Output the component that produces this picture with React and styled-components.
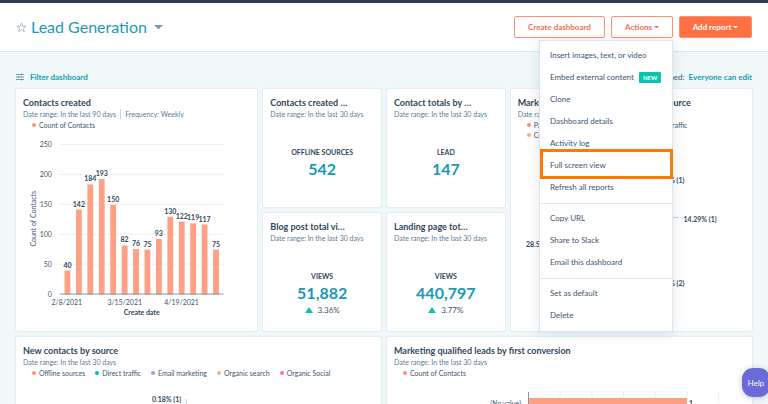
import React from 'react'
import styled, { createGlobalStyle } from 'styled-components';


const GlobalStyle = createGlobalStyle`
  * {
    box-sizing: border-box;
  }
  body {
    margin: 0;
    background: #f0f8f9;
    color: #40566f;
    font-family: Lato, "Liberation Sans", sans-serif;
    font-size: 8px;
  }
  button {
    font-family: inherit;
  }
`;

const Page = styled.div`
  height: 100vh;
  overflow: hidden;
`;

const TopBar = styled.div`
  height: 3px;
  background: #2d3e50;
`;

const Header = styled.header`
  display: flex;
  align-items: center;
  justify-content: space-between;
  height: 49px;
  padding: 0 16px;
  background: #fff;
  border-bottom: 1px solid #dbe4ea;
`;

const TitleGroup = styled.div`
  display: flex;
  align-items: center;
  gap: 4px;
`;

const PageTitle = styled.h1`
  margin: 0;
  color: #1b9bb8;
  font-size: 16px;
  line-height: 24px;
  font-weight: 400;
`;

const IconButton = styled.button`
  display: flex;
  padding: 0;
  border: none;
  background: none;
`;

const TitleMenuButton = styled(IconButton)`
  margin-left: 3px;
`;

const ButtonGroup = styled.div`
  display: flex;
  gap: 6px;
`;

const Button = styled.button`
  display: flex;
  align-items: center;
  justify-content: center;
  gap: 2px;
  min-width: ${props => props.$width}px;
  height: 22px;
  padding: 0;
  border: 1px solid #ff8f73;
  border-radius: 2px;
  background: ${props => props.$primary ? '#ff7043' : '#fff'};
  color: ${props => props.$primary ? '#fff' : '#f3704c'};
  font-size: 8px;
  font-weight: 700;
  cursor: pointer;
`;

const MenuAnchor = styled.div`
  position: relative;
`;

const Menu = styled.div`
  position: absolute;
  top: 24px;
  right: 0;
  z-index: 2;
  width: 134px;
  background: #fff;
  border: 1px solid #dce5ec;
  box-shadow: 0 1px 12px rgba(45, 62, 80, 0.13);
`;

const MenuGroup = styled.div`
  padding: 4px 0;

  & + & {
    border-top: 1px solid #e0e8ed;
  }
`;

const MenuItem = styled.button`
  position: relative;
  display: flex;
  align-items: center;
  gap: 5px;
  width: 100%;
  height: 22px;
  padding: 0 10px 2px;
  border: none;
  background: none;
  color: #40566f;
  font-size: 8px;
  text-align: left;
  white-space: nowrap;
`;

const Highlight = styled.span`
  position: absolute;
  inset: -6px -1px -2px 0;
  border: 3px solid #ff7a00;
  pointer-events: none;
`;

const Badge = styled.span`
  padding: 0 4px;
  border-radius: 1px;
  background: #0cc3ab;
  color: #fff;
  font-size: 6px;
  line-height: 11px;
  font-weight: 700;
`;

const Content = styled.main`
  padding: 20px 16px;
`;

const FilterRow = styled.div`
  display: flex;
  align-items: center;
  justify-content: space-between;
  height: 10px;
  margin-bottom: 7px;
`;

const LinkButton = styled.button`
  display: inline-flex;
  align-items: center;
  gap: 6px;
  padding: 0;
  border: none;
  background: none;
  color: #0f9fb5;
  font-size: 8px;
  line-height: 10px;
  font-weight: 700;
`;

const Assigned = styled.div`
  display: flex;
  gap: 4px;
  line-height: 10px;
`;

const Grid = styled.div`
  display: grid;
  grid-template-columns: repeat(6, 1fr);
  grid-auto-rows: 118px;
  gap: 6px;
`;

const CardBox = styled.section`
  grid-column: span ${props => props.$cols || 1};
  grid-row: span ${props => props.$rows || 1};
  min-width: 0;
  overflow: hidden;
  background: #fff;
  border-radius: 2px;
  box-shadow: 0 0 2px rgba(45, 80, 110, 0.22);
`;

const CardHead = styled.div`
  padding: 8px 7px 0;
`;

const CardTitle = styled.h2`
  margin: 0;
  color: #33475b;
  font-size: 9px;
  line-height: 12px;
  font-weight: 700;
  white-space: nowrap;
`;

const CardMeta = styled.div`
  display: flex;
  color: #5d7a96;
  font-size: 7px;
  line-height: 10px;

  span + span {
    margin-left: 4px;
    padding-left: 4px;
    border-left: 1px solid #cbd6e2;
  }
`;

const LegendList = styled.ul`
  display: flex;
  flex-wrap: wrap;
  column-gap: 10px;
  margin: 1px 0 0;
  padding: 0 0 0 9px;
  font-size: 7px;
  line-height: 10px;
  list-style: none;
`;

const LegendItem = styled.li`
  display: flex;
  align-items: center;
  gap: 3px;

  &::before {
    content: '';
    width: 4px;
    height: 4px;
    border-radius: 50%;
    background: ${props => props.$color};
  }
`;

const Metric = styled.div`
  display: flex;
  flex-direction: column;
  align-items: center;
  margin-top: 28px;
`;

const MetricLabel = styled.div`
  color: #33475b;
  font-size: 7px;
  line-height: 10px;
  font-weight: 700;
`;

const MetricValue = styled.div`
  margin-top: 2px;
  color: #169ab5;
  font-size: 16px;
  line-height: 20px;
  font-weight: 700;
`;

const MetricChange = styled.div`
  display: flex;
  align-items: center;
  gap: 5px;
  margin-top: 2px;
  font-size: 8px;
  line-height: 10px;
`;

const Chart = styled.svg`
  display: block;
  width: 100%;
  font-size: 7px;
  fill: #40566f;
`;

const ChartLabel = styled.text`
  font-weight: 700;
  fill: #33475b;
`;

const HelpButton = styled.button`
  position: fixed;
  right: -2px;
  bottom: 7px;
  z-index: 3;
  width: 28px;
  height: 29px;
  padding: 0;
  border: none;
  border-radius: 11px;
  background: #6b6bd8;
  color: #fff;
  font-size: 8px;
  box-shadow: 0 1px 6px rgba(45, 62, 80, 0.25);
`;


const contacts = [40, 142, 184, 193, 150, 82, 76, 75, 93, 130, 122, 119, 117, 75];

const menuGroups = [
  ['Insert images, text, or video', 'Embed external content', 'Clone', 'Dashboard details', 'Activity log', 'Full screen view', 'Refresh all reports'],
  ['Copy URL', 'Share to Slack', 'Email this dashboard'],
  ['Set as default', 'Delete'],
];

const metrics = [
  { title: 'Contacts created …', label: 'OFFLINE SOURCES', value: '542' },
  { title: 'Contact totals by …', label: 'LEAD', value: '147' },
  { title: 'Blog post total vi…', label: 'VIEWS', value: '51,882', change: '3.36%' },
  { title: 'Landing page tot…', label: 'VIEWS', value: '440,797', change: '3.77%' },
];

const Caret = ({ size = 5, color = 'currentColor' }) => (
  <svg width={size} height={size / 2} viewBox="0 0 8 4" aria-hidden="true">
    <path d="M0 0h8L4 4z" fill={color} />
  </svg>
);

const Card = ({ title, meta = ['Date range: In the last 30 days'], legend, cols, rows, children }) => (
  <CardBox $cols={cols} $rows={rows}>
    <CardHead>
      <CardTitle>{title}</CardTitle>
      <CardMeta>{meta.map(m => <span key={m}>{m}</span>)}</CardMeta>
      {legend && (
        <LegendList>
          {legend.map(([name, color]) => <LegendItem key={name} $color={color}>{name}</LegendItem>)}
        </LegendList>
      )}
    </CardHead>
    {children}
  </CardBox>
);

const MetricCard = ({ title, label, value, change }) => (
  <Card title={title}>
    <Metric>
      <MetricLabel>{label}</MetricLabel>
      <MetricValue>{value}</MetricValue>
      {change && (
        <MetricChange>
          <svg width="8" height="6" viewBox="0 0 8 6" aria-hidden="true"><path d="M4 0l4 6H0z" fill="#0cc3ab" /></svg>
          {change}
        </MetricChange>
      )}
    </Metric>
  </Card>
);

const ContactsChart = () => (
  <Chart viewBox="0 0 242 200">
    {[0, 50, 100, 150, 200, 250].map(v => {
      const y = 165 - v * 0.6;
      return (
        <g key={v}>
          {v > 0 && <line x1="44" x2="208" y1={y - 0.5} y2={y - 0.5} stroke="#dfe6ec" strokeDasharray="1.5 1" />}
          <text x="36" y={y + 2.5} textAnchor="end">{v}</text>
        </g>
      );
    })}
    {contacts.map((v, i) => {
      const x = 51.6 + i * 11.46;
      return (
        <g key={i}>
          <rect x={x - 2.9} y={165 - v * 0.6} width="5.8" height={v * 0.6} fill="#ff9f84" />
          <ChartLabel x={x} y={162 - v * 0.6} textAnchor="middle">{v}</ChartLabel>
        </g>
      );
    })}
    <line x1="44" x2="208" y1="164.5" y2="164.5" stroke="#8296ab" />
    <text x="51" y="175" textAnchor="middle">2/8/2021</text>
    <text x="109" y="175" textAnchor="middle">3/15/2021</text>
    <text x="166" y="175" textAnchor="middle">4/19/2021</text>
    <ChartLabel x="126" y="186" textAnchor="middle">Create date</ChartLabel>
    <text transform="translate(20 89) rotate(-90)" textAnchor="middle">Count of Contacts</text>
  </Chart>
);

const LeadsPie = () => (
  <Chart viewBox="0 0 242 190">
    <circle cx="95" cy="84" r="50" fill="#ff9f84" />
    <path d="M95 84V34a50 50 0 0 1 49 40z" fill="#00bda5" />
    <path d="M95 84L144 74a50 50 0 0 1-14 45z" fill="#b7aaf0" />
    <path d="M145 80.5C156 80.5 158 78 168 77.5" fill="none" stroke="#b5cddb" />
    <ChartLabel x="15" y="107">28.57% (2)</ChartLabel>
    <ChartLabel x="174" y="43" textAnchor="end">14.29% (1)</ChartLabel>
    <ChartLabel x="173" y="82">14.29% (1)</ChartLabel>
    <ChartLabel x="174" y="146" textAnchor="end">28.57% (2)</ChartLabel>
  </Chart>
);

const SourcePie = () => (
  <Chart viewBox="0 0 365 90">
    <path d="M169.5 21c1 2 1 4 1 8" fill="none" stroke="#b5cddb" />
    <ChartLabel x="136" y="24.5">0.18% (1)</ChartLabel>
    <circle cx="170" cy="79" r="50" fill="#ff9f84" />
  </Chart>
);

const ConversionChart = () => (
  <Chart viewBox="0 0 365 90">
    {[1, 2, 3, 4, 5, 6].map(i => (
      <line key={i} x1={141.5 + i * 31.7} x2={141.5 + i * 31.7} y1="14" y2="90" stroke="#dfe6ec" strokeDasharray="2 1" />
    ))}
    <rect x="142" y="20" width="158" height="16" fill="#ff9f84" />
    <line x1="141.5" x2="141.5" y1="14" y2="90" stroke="#8296ab" />
    <text x="134" y="28" textAnchor="end">(No value)</text>
    <ChartLabel x="302" y="28">1</ChartLabel>
  </Chart>
);

const App = () => {
  return (
    <Page>
      <GlobalStyle />
      <TopBar />
      <Header>
        <TitleGroup>
          <IconButton aria-label="Favorite">
            <svg width="11" height="11" viewBox="0 0 24 24" fill="none" stroke="#a9b8c8" strokeWidth="2">
              <path d="M12 2l2.7 7.2H22l-5.9 4.7 2.2 7.5L12 17l-6.3 4.4 2.2-7.5L2 9.2h7.3z" />
            </svg>
          </IconButton>
          <PageTitle>Lead Generation</PageTitle>
          <TitleMenuButton aria-label="Switch dashboard">
            <Caret size={9} color="#7c98b6" />
          </TitleMenuButton>
        </TitleGroup>
        <ButtonGroup>
          <Button $width={91}>Create dashboard</Button>
          <MenuAnchor>
            <Button $width={62}>Actions <Caret /></Button>
            <Menu>
              {menuGroups.map(group => (
                <MenuGroup key={group[0]}>
                  {group.map(item => (
                    <MenuItem key={item}>
                      {item}
                      {item === 'Embed external content' && <Badge>NEW</Badge>}
                      {item === 'Full screen view' && <Highlight />}
                    </MenuItem>
                  ))}
                </MenuGroup>
              ))}
            </Menu>
          </MenuAnchor>
          <Button $primary $width={73}>Add report <Caret /></Button>
        </ButtonGroup>
      </Header>
      <Content>
        <FilterRow>
          <LinkButton>
            <svg width="8" height="8" viewBox="0 0 8 8" stroke="#7c98b6" aria-hidden="true">
              <path d="M0 1.5h8M0 4h8M0 6.5h8" />
              <path d="M5.5 0.5v2M2.5 3v2M5.5 5.5v2" />
            </svg>
            Filter dashboard
          </LinkButton>
          <Assigned>
            <span>Assigned:</span>
            <LinkButton>Everyone can edit</LinkButton>
          </Assigned>
        </FilterRow>
        <Grid>
          <Card
            title="Contacts created"
            meta={['Date range: In the last 90 days', 'Frequency: Weekly']}
            legend={[['Count of Contacts', '#ff8f73']]}
            cols={2}
            rows={2}
          >
            <ContactsChart />
          </Card>
          {metrics.slice(0, 2).map(m => <MetricCard key={m.title} {...m} />)}
          <Card
            title="Marketing qualified leads by original source"
            legend={[['Paid search', '#ff8f73'], ['Offline sources', '#00bda5'], ['Direct traffic', '#b7aaf0'], ['Content syndication', '#ffb07c']]}
            cols={2}
            rows={2}
          >
            <LeadsPie />
          </Card>
          {metrics.slice(2).map(m => <MetricCard key={m.title} {...m} />)}
          <Card
            title="New contacts by source"
            legend={[
              ['Offline sources', '#ff8f73'],
              ['Direct traffic', '#00b8c0'],
              ['Email marketing', '#a99be8'],
              ['Organic search', '#ffb07c'],
              ['Organic Social', '#f2789f'],
            ]}
            cols={3}
          >
            <SourcePie />
          </Card>
          <Card
            title="Marketing qualified leads by first conversion"
            legend={[['Count of Contacts', '#ff8f73']]}
            cols={3}
          >
            <ConversionChart />
          </Card>
        </Grid>
      </Content>
      <HelpButton>Help</HelpButton>
    </Page>
  )
}

export default App
